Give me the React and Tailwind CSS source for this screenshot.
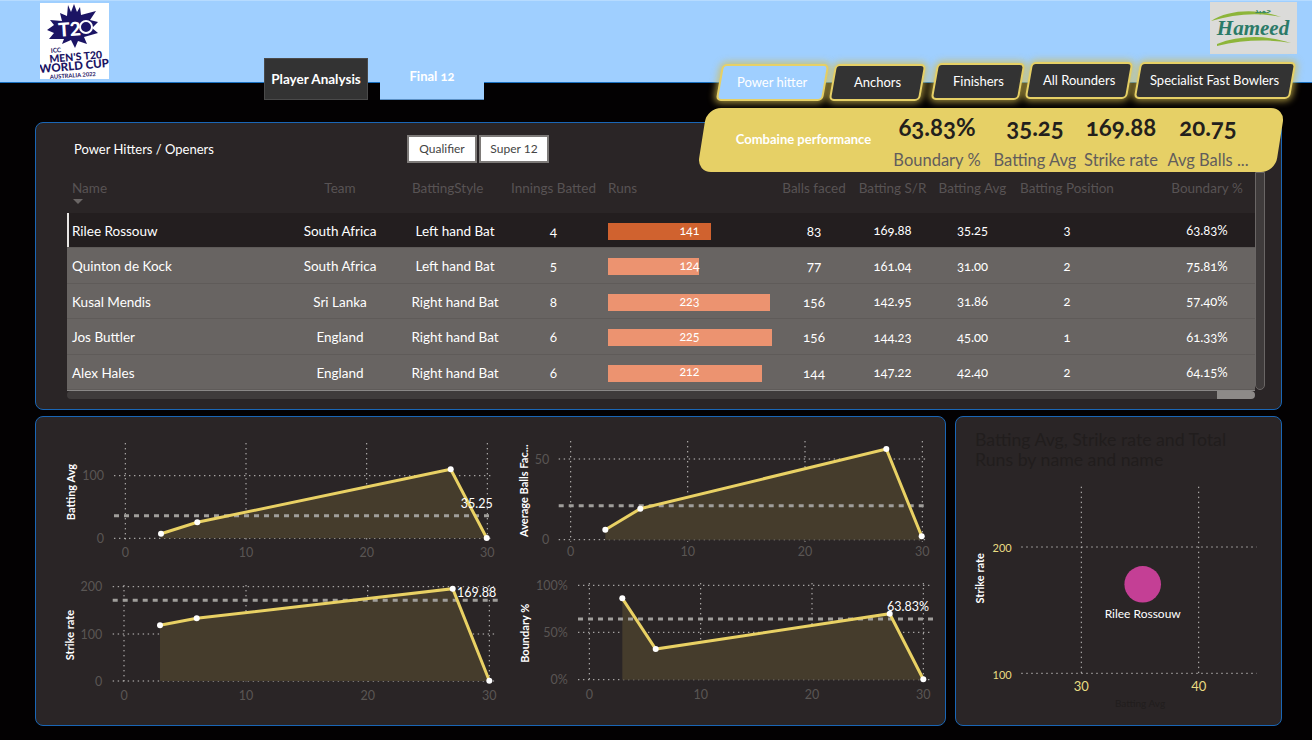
import React from 'react';

const rows = [
  { name: 'Rilee Rossouw', team: 'South Africa', style: 'Left hand Bat', inn: 4, runs: 141, bar: 103, balls: 83, sr: '169.88', avg: '35.25', pos: 3, bnd: '63.83%' },
  { name: 'Quinton de Kock', team: 'South Africa', style: 'Left hand Bat', inn: 5, runs: 124, bar: 91, balls: 77, sr: '161.04', avg: '31.00', pos: 2, bnd: '75.81%' },
  { name: 'Kusal Mendis', team: 'Sri Lanka', style: 'Right hand Bat', inn: 8, runs: 223, bar: 162, balls: 156, sr: '142.95', avg: '31.86', pos: 2, bnd: '57.40%' },
  { name: 'Jos Buttler', team: 'England', style: 'Right hand Bat', inn: 6, runs: 225, bar: 164, balls: 156, sr: '144.23', avg: '45.00', pos: 1, bnd: '61.33%' },
  { name: 'Alex Hales', team: 'England', style: 'Right hand Bat', inn: 6, runs: 212, bar: 154, balls: 144, sr: '147.22', avg: '42.40', pos: 2, bnd: '64.15%' },
];

const gridCols = 'grid grid-cols-[207px_132px_98px_99px_173px_76px_81px_79px_110px_133px]';

const charts = [
  {
    view: '36 417 464 153',
    title: 'Batting Avg', titleAt: [70.7, 492],
    vx: [125.3, 246, 366.7, 487.3], vy: [443, 542],
    hy: [475.7, 538.3], hx: [114, 493],
    yTicks: [['100', 475.7], ['0', 538.3]], yEnd: 104, xLabelY: 552,
    pts: [[161, 533.7], [197.3, 522.3], [450.7, 469.3], [486.7, 538]],
    base: 538.3, dashY: 515.7, dashX: [114, 493],
    label: '35.25', labelAt: [476.7, 503.7],
  },
  {
    view: '500 417 445 153',
    title: 'Average Balls Fac...', titleAt: [523.3, 490.7],
    vx: [570.7, 687.7, 805, 922.3], vy: [441, 541.7],
    hy: [459, 539.7], hx: [558.7, 928.3],
    yTicks: [['50', 459], ['0', 539.7]], yEnd: 549.3, xLabelY: 551.7,
    pts: [[605.3, 529.7], [640.3, 508.7], [886.3, 449], [921.7, 536.3]],
    base: 539.7, dashY: 505.7, dashX: [558.7, 928.3],
  },
  {
    view: '36 570 464 155',
    title: 'Strike rate', titleAt: [69.3, 635],
    vx: [124, 246, 367.7, 489.3], vy: [585, 684],
    hy: [586.7, 634, 681], hx: [112.7, 496.7],
    yTicks: [['200', 586.7], ['100', 634], ['0', 681]], yEnd: 102.3, xLabelY: 695.7,
    pts: [[160, 625.3], [196.7, 618.3], [452.7, 588.7], [489.3, 680.7]],
    base: 681, dashY: 600.3, dashX: [112.7, 500],
    label: '169.88', labelAt: [476.7, 592.3],
  },
  {
    view: '500 570 445 155',
    title: 'Boundary %', titleAt: [524.3, 633.3],
    vx: [589.3, 700.7, 812, 923.3], vy: [583, 683],
    hy: [585.3, 632.3, 679.7], hx: [578, 932.3],
    yTicks: [['100%', 585.3], ['50%', 632.3], ['0%', 679.7]], yEnd: 567.7, xLabelY: 694.3,
    pts: [[622.3, 598.3], [655.7, 649], [889.7, 613.7], [923.3, 679.3]],
    base: 679.7, dashY: 619, dashX: [578, 933],
    label: '63.83%', labelAt: [908, 606.7],
  },
];

function LineChart({ c }) {
  const line = c.pts.map((p) => p.join(',')).join(' ');
  const first = c.pts[0];
  const last = c.pts[c.pts.length - 1];
  const area = `${first[0]},${c.base} ${line} ${last[0]},${c.base}`;
  return (
    <svg viewBox={c.view} className="w-full h-full block lining-nums">
      {c.vx.map((x) => (
        <line key={x} x1={x} x2={x} y1={c.vy[0]} y2={c.vy[1]} stroke="#c4c2c0" strokeDasharray="1.4 3.6" />
      ))}
      {c.hy.map((y) => (
        <line key={y} x1={c.hx[0]} x2={c.hx[1]} y1={y} y2={y} stroke="#c4c2c0" strokeDasharray="1.4 3.6" />
      ))}
      <polygon points={area} fill="#453c2c" />
      <line x1={c.dashX[0]} x2={c.dashX[1]} y1={c.dashY} y2={c.dashY} stroke="#a09e9b" strokeWidth="3" strokeDasharray="5 5" />
      <polyline points={line} fill="none" stroke="#e9d164" strokeWidth="3" />
      {c.pts.map((p) => (
        <circle key={p[0]} cx={p[0]} cy={p[1]} r="3" fill="#fff" />
      ))}
      {c.yTicks.map(([t, y]) => (
        <text key={t} x={c.yEnd} y={y} textAnchor="end" dominantBaseline="central" fontSize="12.5" fill="#5a5654">{t}</text>
      ))}
      {c.vx.map((x, i) => (
        <text key={x} x={x} y={c.xLabelY} textAnchor="middle" dominantBaseline="central" fontSize="12.5" fill="#5a5654">{i * 10}</text>
      ))}
      <text
        x={c.titleAt[0]}
        y={c.titleAt[1]}
        transform={`rotate(-90 ${c.titleAt[0]} ${c.titleAt[1]})`}
        textAnchor="middle"
        dominantBaseline="central"
        fontSize="11"
        fontWeight="700"
        fill="#fff"
      >
        {c.title}
      </text>
      {c.label && (
        <text x={c.labelAt[0]} y={c.labelAt[1]} textAnchor="middle" dominantBaseline="central" fontSize="12.5" fill="#fff">{c.label}</text>
      )}
    </svg>
  );
}

function ScatterChart() {
  return (
    <svg viewBox="956 477 325 248" className="w-full flex-1 block lining-nums">
      {[1081.3, 1198.7].map((x) => (
        <line key={x} x1={x} x2={x} y1="486.7" y2="673.3" stroke="#c4c2c0" strokeDasharray="1.4 3.6" />
      ))}
      {[547, 673.3].map((y) => (
        <line key={y} x1="1021.3" x2="1256.7" y1={y} y2={y} stroke="#c4c2c0" strokeDasharray="1.4 3.6" />
      ))}
      <circle cx="1142.7" cy="584.3" r="18.3" fill="#c43f95" />
      <text x="1142.7" y="613.3" textAnchor="middle" dominantBaseline="central" fontSize="12" fill="#fff">Rilee Rossouw</text>
      <text x="1011.7" y="547" textAnchor="end" dominantBaseline="central" fontSize="11" fill="#e9dc82">200</text>
      <text x="1011.7" y="674.5" textAnchor="end" dominantBaseline="central" fontSize="11" fill="#e9dc82">100</text>
      <text x="1081.3" y="685.5" textAnchor="middle" dominantBaseline="central" fontSize="13" fill="#e9dc82">30</text>
      <text x="1198.7" y="685.5" textAnchor="middle" dominantBaseline="central" fontSize="13" fill="#e9dc82">40</text>
      <text x="979.3" y="578.3" transform="rotate(-90 979.3 578.3)" textAnchor="middle" dominantBaseline="central" fontSize="11" fontWeight="700" fill="#fff">Strike rate</text>
      <text x="1140" y="703" textAnchor="middle" dominantBaseline="central" fontSize="10" fill="#211d1d">Batting Avg</text>
    </svg>
  );
}

function WorldCupLogo() {
  return (
    <svg viewBox="0 0 69 76" className="w-[69px] h-[76px] mt-[2px] ml-[40px] shrink-0 bg-white block lining-nums">
      <polygon
        points="10,17 22,18 20,10 27,13 28,2 31,9 34,1 37,9 40,4 41,12 56,8 50,17 58,19 52,25 58,30 44,34 47,41 38,38 35,45 31,37 22,41 24,36 9,36 14,30 7,27 14,22"
        fill="#1b1464"
      />
      <text x="30" y="33" textAnchor="middle" fontSize="19" fontWeight="900" fill="#fff" transform="rotate(-4 30 33)">T2</text>
      <circle cx="46" cy="24" r="6" fill="none" stroke="#fff" strokeWidth="2" />
      <text x="11" y="50" fontSize="6.5" fontWeight="700" fill="#1b1464" transform="rotate(-5 11 50)">ICC</text>
      <text x="36" y="57.5" textAnchor="middle" fontSize="10.5" fontWeight="900" fill="#1b1464" transform="rotate(-5 36 57.5)">MEN'S T20</text>
      <text x="34.5" y="67" textAnchor="middle" fontSize="11.5" fontWeight="900" fill="#1b1464" transform="rotate(-5 34.5 67)">WORLD CUP</text>
      <text x="33" y="74.5" textAnchor="middle" fontSize="5.8" fontWeight="700" fill="#1b1464" transform="rotate(-4 33 74.5)">AUSTRALIA 2022</text>
    </svg>
  );
}

function HameedLogo() {
  return (
    <svg viewBox="0 0 87 52" className="w-[87px] h-[52px] block">
      <rect width="87" height="52" fill="#dbdbd9" />
      <path d="M1 19 C 18 8, 46 6, 71 15 C 48 10, 24 12, 1 19 Z" fill="#8db53a" />
      <path d="M7 42 C 30 33, 56 33, 81 41 C 58 37, 32 38, 7 44 Z" fill="#8db53a" />
      <text x="53" y="11" textAnchor="middle" fontSize="7" fontWeight="700" fill="#3c8a5c" className="[font-family:'DejaVu_Sans',sans-serif]">حميد</text>
      <text x="43" y="33" textAnchor="middle" fontSize="21" fontStyle="italic" fontWeight="700" fill="#2b7a68" className="[font-family:'Liberation_Serif',serif]">Hameed</text>
    </svg>
  );
}

function SkewTab({ label, className, active }) {
  return (
    <div
      className={`skew-x-[-10deg] h-[37px] rounded-[5px] border-2 border-[#e6d066] flex items-center justify-center shadow-[0_0_7px_2px_rgba(214,190,80,0.75)] ${active ? 'bg-[#9fcfff]' : 'bg-[#333333]'} ${className}`}
    >
      <span className="skew-x-[10deg] text-white text-[13px] whitespace-nowrap">{label}</span>
    </div>
  );
}

function Stat({ value, label, width }) {
  return (
    <div className={`${width} flex flex-col items-center`}>
      <div className="mt-[5px] h-[28px] leading-[28px] text-[24px] font-bold text-[#23201c] oldstyle-nums whitespace-nowrap">{value}</div>
      <div className="mt-[9px] h-[19px] overflow-hidden leading-[20px] text-[16.5px] text-[#625d5c] whitespace-nowrap">{label}</div>
    </div>
  );
}

export default function App() {
  return (
    <div className="relative w-[1312px] h-[740px] bg-[#030102] overflow-hidden flex flex-col [font-family:Lato,'Open_Sans',sans-serif] oldstyle-nums">
      {/* Top band */}
      <div className="h-[83px] shrink-0 bg-[#9fcfff] border-b border-[#1a70c0] border-t border-t-[#b6dbff] flex items-start">
        <WorldCupLogo />
        <div className="ml-[155px] mt-[57px] w-[104px] h-[42px] bg-[#333333] border border-[#4a4a4a] text-white text-[13.5px] font-bold flex items-center justify-center shrink-0">
          Player Analysis
        </div>
        <div className="ml-[12px] mt-[57px] w-[104px] h-[42px] bg-[#9fcfff] border-b border-[#5a8fc4] text-white text-[13px] font-bold flex items-center justify-center pb-[3px] shrink-0">
          Final 12
        </div>
        <div className="ml-auto mr-[15px] flex flex-col items-end">
          <div className="mt-px"><HameedLogo /></div>
          <div className="mt-[7px] flex items-start pr-[4px]">
            <SkewTab label="Power hitter" active className="w-[107px] mt-[3px]" />
            <SkewTab label="Anchors" className="w-[91px] ml-[6px] mt-[3px]" />
            <SkewTab label="Finishers" className="w-[88px] ml-[11px] mt-[2px]" />
            <SkewTab label="All Rounders" className="w-[102px] ml-[6px] mt-px" />
            <SkewTab label="Specialist Fast Bowlers" className="w-[156px] ml-[7px] mt-px" />
          </div>
        </div>
      </div>

      {/* Dashboard */}
      <div className="pl-[35px] pt-[39px] flex flex-col gap-[6px]">
        <div className="w-[1247px] h-[288px] bg-[#2a2526] border border-[#1a66b5] rounded-lg pl-[31px] flex flex-col">
          <div className="h-[49px] shrink-0 flex items-start">
            <div className="ml-[7px] mt-[17px] text-white text-[13px] w-[333px]">Power Hitters / Openers</div>
            <div className="mt-[12px] flex gap-[2px] lining-nums">
              <div className="w-[70px] h-[28px] bg-white border-2 border-[#7d7a78] text-[#444] text-[12px] flex items-center justify-center">Qualifier</div>
              <div className="w-[70px] h-[28px] bg-white border-2 border-[#7d7a78] text-[#444] text-[12px] flex items-center justify-center">Super 12</div>
            </div>
          </div>
          <div className="flex">
            <div className="w-[1188px] shrink-0">
              <div className={`${gridCols} h-[41px] text-[13.5px] text-[#585354] text-center pt-[7px]`}>
                <div className="text-left pl-[5px]">
                  <div className="leading-[18px]">Name</div>
                  <div className="w-0 h-0 ml-[1px] mt-[2px] border-x-[5px] border-x-transparent border-t-[5px] border-t-[#6a6665]" />
                </div>
                <div className="leading-[18px]">Team</div>
                <div className="leading-[18px] text-left pl-[6px]">BattingStyle</div>
                <div className="leading-[18px] whitespace-nowrap">Innings Batted</div>
                <div className="leading-[18px] text-left pl-[5px]">Runs</div>
                <div className="leading-[18px] whitespace-nowrap">Balls faced</div>
                <div className="leading-[18px] whitespace-nowrap">Batting S/R</div>
                <div className="leading-[18px] whitespace-nowrap">Batting Avg</div>
                <div className="leading-[18px] whitespace-nowrap">Batting Position</div>
                <div className="leading-[18px] whitespace-nowrap pl-[37px]">Boundary %</div>
              </div>
              {rows.map((r, i) => (
                <div
                  key={r.name}
                  className={`${gridCols} relative h-[35.4px] pt-[2px] items-center text-center text-white text-[13.5px] border-b border-[#5f5b59] ${i === 0 ? 'bg-[#231e1f]' : 'bg-[#686462]'}`}
                >
                  {i === 0 && <div className="absolute left-0 top-0 bottom-0 w-[2px] bg-[#e8e6e4]" />}
                  <div className="text-left pl-[5px] whitespace-nowrap">{r.name}</div>
                  <div>{r.team}</div>
                  <div className="whitespace-nowrap">{r.style}</div>
                  <div>{r.inn}</div>
                  <div className="relative h-full flex items-center justify-center text-[12.5px]">
                    <div
                      className={`absolute left-[5px] top-[8px] h-[17px] ${i === 0 ? 'bg-[#d0622f]' : 'bg-[#ec9370]'}`}
                      style={{ width: r.bar }}
                    />
                    <span className="relative">{r.runs}</span>
                  </div>
                  <div>{r.balls}</div>
                  <div className="text-[13px]">{r.sr}</div>
                  <div className="text-[13px]">{r.avg}</div>
                  <div className="text-[13px]">{r.pos}</div>
                  <div className="text-[13px] pl-[37px]">{r.bnd}</div>
                </div>
              ))}
              <div className="h-[9px] flex border-t border-[#8a8786]">
                <div className="flex-1 bg-[#3f3b3b] rounded-l-md" />
                <div className="w-[38px] bg-[#8d8a88] rounded-r-md" />
              </div>
            </div>
            <div className="w-[10px] h-[218px] bg-[#3f3b3b] border border-[#6a6665] rounded-b-md shrink-0" />
          </div>
        </div>

        <div className="flex gap-[9px]">
          <div className="w-[911px] h-[310px] bg-[#2a2526] border border-[#1a66b5] rounded-lg grid grid-cols-[464px_445px] grid-rows-[153px_155px]">
            {charts.map((c) => (
              <LineChart key={c.title} c={c} />
            ))}
          </div>
          <div className="w-[327px] h-[310px] bg-[#2a2526] border border-[#1a66b5] rounded-lg flex flex-col">
            <div className="h-[60px] shrink-0 pl-[19px] pt-[13px] text-[#211d1d] text-[17.7px] leading-[20px]">
              Batting Avg, Strike rate and Total<br />Runs by name and name
            </div>
            <ScatterChart />
          </div>
        </div>
      </div>

      {/* Yellow summary card lying over the table panel */}
      <div className="absolute left-[702px] top-[108px] w-[578px] h-[64px] bg-[#e6d066] rounded-[14px] skew-x-[-9deg]">
        <div className="skew-x-[9deg] h-full flex">
          <div className="w-[186px] pl-[17px] h-full flex items-center justify-center text-white text-[13px] font-bold whitespace-nowrap">
            Combaine performance
          </div>
          <Stat value="63.83%" label="Boundary %" width="w-[98px]" />
          <Stat value="35.25" label="Batting Avg" width="w-[98px]" />
          <Stat value="169.88" label="Strike rate" width="w-[74px]" />
          <Stat value="20.75" label="Avg Balls ..." width="w-[100px]" />
        </div>
      </div>
    </div>
  );
}
